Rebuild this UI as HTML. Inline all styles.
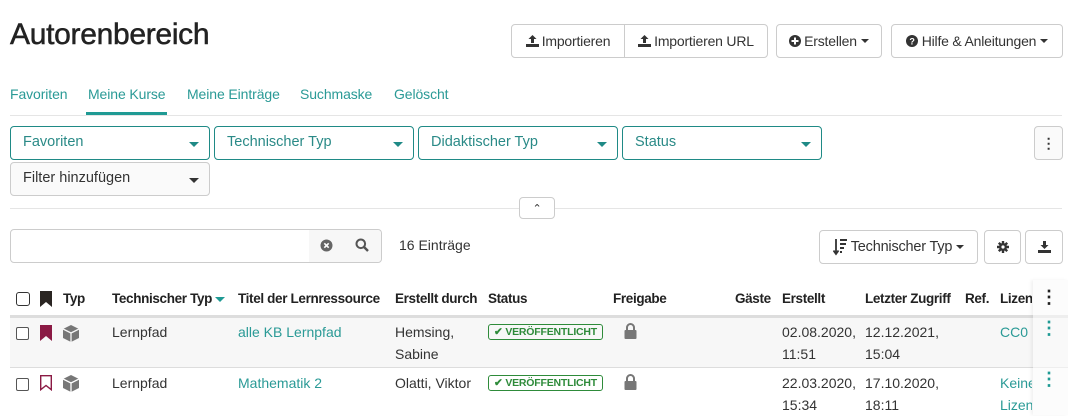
<!DOCTYPE html>
<html><head><meta charset="utf-8"><style>
*{box-sizing:border-box;margin:0;padding:0}
body{width:1068px;height:415px;overflow:hidden;background:#fff;font-family:"Liberation Sans",Arial,sans-serif;font-size:14px;color:#333;position:relative}
.a{position:absolute}
.btn{position:absolute;border:1px solid #ccc;border-radius:4px;background:#fff;height:34px;display:flex;align-items:center;justify-content:center;font-size:14px;color:#333;white-space:nowrap;letter-spacing:-0.2px}
.car{display:inline-block;width:0;height:0;border-left:4px solid transparent;border-right:4px solid transparent;border-top:4px solid #333;margin-left:4px;vertical-align:middle}
.tab{position:absolute;top:86px;color:#2a9a96;font-size:14px;letter-spacing:-0.1px}
.sel{position:absolute;height:34px;border:1px solid #1f8a86;border-radius:4px;color:#2a8a87;font-size:14.5px;padding:7px 12px}
.sel .car{position:absolute;right:10px;top:15px;border-top-color:#1f8a86;border-left-width:5px;border-right-width:5px;border-top-width:5px}
.th{position:absolute;top:291px;font-weight:bold;font-size:13.5px;color:#222;letter-spacing:-0.35px}
.td{position:absolute;font-size:14px;color:#333;line-height:22px}
.lk{color:#2a9a96}
.badge{position:absolute;border:1px solid #2e8b3a;border-radius:3px;color:#2e8b3a;font-size:10.5px;font-weight:bold;height:16px;padding:0 5px;line-height:14px;white-space:nowrap;letter-spacing:-0.2px}
.cb{position:absolute;width:13px;height:13px;border:1px solid #555;border-radius:2px;background:#fff}
</style></head><body>

<div class="a" style="left:10px;top:18px;font-size:30px;color:#222;-webkit-text-stroke:0.5px #222;letter-spacing:-0.3px">Autorenbereich</div>

<div class="btn" style="left:511px;top:24px;width:114px;border-radius:4px 0 0 4px"><svg width="13" height="12" viewBox="0 0 13 12" style="margin-right:3px"><path d="M6.5 0L2.5 4h2.5v4h3V4h2.5z M0 9h13v3H0z" fill="#333"/></svg>Importieren</div>
<div class="btn" style="left:624px;top:24px;width:144px;border-radius:0 4px 4px 0"><svg width="13" height="12" viewBox="0 0 13 12" style="margin-right:3px"><path d="M6.5 0L2.5 4h2.5v4h3V4h2.5z M0 9h13v3H0z" fill="#333"/></svg>Importieren URL</div>
<div class="btn" style="left:776px;top:24px;width:106px"><svg width="12" height="12" viewBox="0 0 12 12" style="margin-right:3px"><circle cx="6" cy="6" r="6" fill="#333"/><path d="M5 2.5h2v2.5h2.5v2H7v2.5H5V7H2.5V5H5z" fill="#fff"/></svg>Erstellen<span class="car"></span></div>
<div class="btn" style="left:891px;top:24px;width:172px"><svg width="12" height="12" viewBox="0 0 12 12" style="margin-right:4px"><circle cx="6" cy="6" r="6" fill="#333"/><text x="6" y="9.5" font-size="9" font-weight="bold" fill="#fff" text-anchor="middle" font-family="Liberation Sans">?</text></svg>Hilfe &amp; Anleitungen<span class="car"></span></div>

<div class="tab" style="left:10px">Favoriten</div>
<div class="tab" style="left:88px">Meine Kurse</div>
<div class="tab" style="left:187px">Meine Einträge</div>
<div class="tab" style="left:300px">Suchmaske</div>
<div class="tab" style="left:394px">Gelöscht</div>
<div class="a" style="left:10px;top:115px;width:1052px;height:1px;background:#e5e5e5"></div>
<div class="a" style="left:86px;top:112px;width:81px;height:3px;background:#1f9a94"></div>

<div class="sel" style="left:10px;top:126px;width:200px">Favoriten<span class="car"></span></div>
<div class="sel" style="left:214px;top:126px;width:200px">Technischer Typ<span class="car"></span></div>
<div class="sel" style="left:418px;top:126px;width:200px">Didaktischer Typ<span class="car"></span></div>
<div class="sel" style="left:622px;top:126px;width:200px">Status<span class="car"></span></div>
<div class="btn" style="left:1034px;top:126px;width:29px;background:#fafafa;font-weight:bold">⋮</div>
<div class="sel" style="left:10px;top:162px;width:200px;border-color:#ccc;color:#333;background:#fafafa">Filter hinzufügen<span class="car" style="border-top-color:#333"></span></div>

<div class="a" style="left:10px;top:208px;width:1052px;height:1px;background:#e5e5e5"></div>
<div class="btn" style="left:519px;top:197px;width:36px;height:22px;font-size:11px">⌃</div>

<div class="a" style="left:10px;top:229px;width:372px;height:34px;border:1px solid #ccc;border-radius:4px"></div>
<div class="a" style="left:309px;top:230px;width:72px;height:32px;background:#f7f7f7;border-radius:0 4px 4px 0"></div>
<svg class="a" style="left:320px;top:239px" width="13" height="13" viewBox="0 0 13 13"><circle cx="6.5" cy="6.5" r="6" fill="#666"/><path d="M4.3 4.3l4.4 4.4M8.7 4.3l-4.4 4.4" stroke="#fff" stroke-width="1.6"/></svg>
<svg class="a" style="left:355px;top:238px" width="14" height="14" viewBox="0 0 14 14"><circle cx="5.8" cy="5.8" r="4.3" fill="none" stroke="#555" stroke-width="2"/><path d="M9 9l4 4" stroke="#555" stroke-width="2.4"/></svg>
<div class="a" style="left:399px;top:237px;font-size:14px">16 Einträge</div>

<div class="btn" style="left:819px;top:230px;width:159px;font-size:14.5px"><svg width="16" height="18" viewBox="0 0 16 18" style="margin-right:2px"><path d="M3 1v14M0.5 12.5L3 16l2.5-3.5" stroke="#333" stroke-width="1.8" fill="none"/><path d="M7 2h7M7 6h6M7 10h4M7 14h2" stroke="#333" stroke-width="2"/></svg>Technischer Typ<span class="car"></span></div>
<div class="btn" style="left:984px;top:230px;width:37px"><svg width="12" height="12" viewBox="0 0 12 12"><circle cx="6" cy="6" r="4" fill="#333"/><path d="M6 0v12M0 6h12M1.8 1.8l8.4 8.4M10.2 1.8l-8.4 8.4" stroke="#333" stroke-width="2.4"/><circle cx="6" cy="6" r="1.6" fill="#fff"/></svg></div>
<div class="btn" style="left:1025px;top:230px;width:38px"><svg width="13" height="12" viewBox="0 0 13 12"><path d="M6.5 8L2.5 4h2.5V0h3v4h2.5z M0 9h13v3H0z" fill="#333"/></svg></div>

<!-- table -->
<div class="cb" style="left:16px;top:292px;width:14px;height:14px;border-width:1.5px;border-color:#333;border-radius:3px"></div>
<svg class="a" style="left:40px;top:291px" width="12" height="16" viewBox="0 0 12 16"><path d="M0 0h12v16L6 11 0 16z" fill="#2a2522"/></svg>
<div class="th" style="left:63px">Typ</div>
<div class="th" style="left:112px">Technischer Typ <span style="display:inline-block;border-left:5px solid transparent;border-right:5px solid transparent;border-top:5px solid #1f9a94;vertical-align:middle"></span></div>
<div class="th" style="left:238px">Titel der Lernressource</div>
<div class="th" style="left:395px">Erstellt durch</div>
<div class="th" style="left:488px">Status</div>
<div class="th" style="left:613px">Freigabe</div>
<div class="th" style="left:735px">Gäste</div>
<div class="th" style="left:782px">Erstellt</div>
<div class="th" style="left:865px">Letzter Zugriff</div>
<div class="th" style="left:965px">Ref.</div>
<div class="th" style="left:1000px;width:32px;overflow:hidden">Lizenz</div>

<div class="a" style="left:10px;top:315px;width:1058px;height:3px;background:#ddd"></div>
<div class="a" style="left:10px;top:318px;width:1058px;height:50px;background:#f7f7f7"></div>
<div class="a" style="left:10px;top:367px;width:1058px;height:1px;background:#ddd"></div>
<div class="a" style="left:1033px;top:280px;width:35px;height:135px;background:rgba(250,250,250,.6);box-shadow:-2px 0 3px rgba(0,0,0,.06)"></div>
<div class="a" style="left:1040px;top:287px;font-weight:bold;font-size:18px;color:#222">⋮</div>

<!-- row1 -->
<div class="cb" style="left:16px;top:327px"></div>
<svg class="a" style="left:40px;top:325px" width="12" height="16" viewBox="0 0 12 16"><path d="M0 0h12v16L6 11 0 16z" fill="#8b1a44"/></svg>
<svg class="a" style="left:62px;top:325px" width="18" height="17" viewBox="0 0 18 17"><path d="M9 0L17 4v9L9 17 1 13V4z" fill="#777"/><path d="M1 4l8 4 8-4M9 8v9" stroke="#f7f7f7" stroke-width="1.3" fill="none"/></svg>
<div class="td" style="left:112px;top:321px">Lernpfad</div>
<div class="td lk" style="left:238px;top:321px">alle KB Lernpfad</div>
<div class="td" style="left:395px;top:321px">Hemsing,<br>Sabine</div>
<div class="badge" style="left:488px;top:324px">✔ VERÖFFENTLICHT</div>
<svg class="a" style="left:624px;top:323px" width="13" height="16" viewBox="0 0 13 16"><path d="M3 7V4.5a3.5 3.5 0 0 1 7 0V7" stroke="#777" stroke-width="2" fill="none"/><rect x="0.5" y="7" width="12" height="9" rx="1" fill="#777"/></svg>
<div class="td" style="left:782px;top:321px">02.08.2020,<br>11:51</div>
<div class="td" style="left:865px;top:321px">12.12.2021,<br>15:04</div>
<div class="td lk" style="left:1000px;top:321px">CC0</div>
<div class="a" style="left:1040px;top:318px;font-weight:bold;font-size:18px;color:#1f9a94">⋮</div>

<!-- row2 -->
<div class="cb" style="left:16px;top:378px"></div>
<svg class="a" style="left:40px;top:375px" width="12" height="16" viewBox="0 0 12 16"><path d="M0.7 0.7h10.6v14L6 10.5 0.7 14.7z" fill="none" stroke="#8b1a44" stroke-width="1.4"/></svg>
<svg class="a" style="left:62px;top:375px" width="18" height="17" viewBox="0 0 18 17"><path d="M9 0L17 4v9L9 17 1 13V4z" fill="#777"/><path d="M1 4l8 4 8-4M9 8v9" stroke="#fff" stroke-width="1.3" fill="none"/></svg>
<div class="td" style="left:112px;top:372px">Lernpfad</div>
<div class="td lk" style="left:238px;top:372px">Mathematik 2</div>
<div class="td" style="left:395px;top:372px">Olatti, Viktor</div>
<div class="badge" style="left:488px;top:375px">✔ VERÖFFENTLICHT</div>
<svg class="a" style="left:624px;top:374px" width="13" height="16" viewBox="0 0 13 16"><path d="M3 7V4.5a3.5 3.5 0 0 1 7 0V7" stroke="#777" stroke-width="2" fill="none"/><rect x="0.5" y="7" width="12" height="9" rx="1" fill="#777"/></svg>
<div class="td" style="left:782px;top:372px">22.03.2020,<br>15:34</div>
<div class="td" style="left:865px;top:372px">17.10.2020,<br>18:11</div>
<div class="td lk" style="left:1000px;top:372px;width:32px;overflow:hidden;white-space:nowrap">Keine<br>Lizenz</div>
<div class="a" style="left:1040px;top:369px;font-weight:bold;font-size:18px;color:#1f9a94">⋮</div>
</body></html>
